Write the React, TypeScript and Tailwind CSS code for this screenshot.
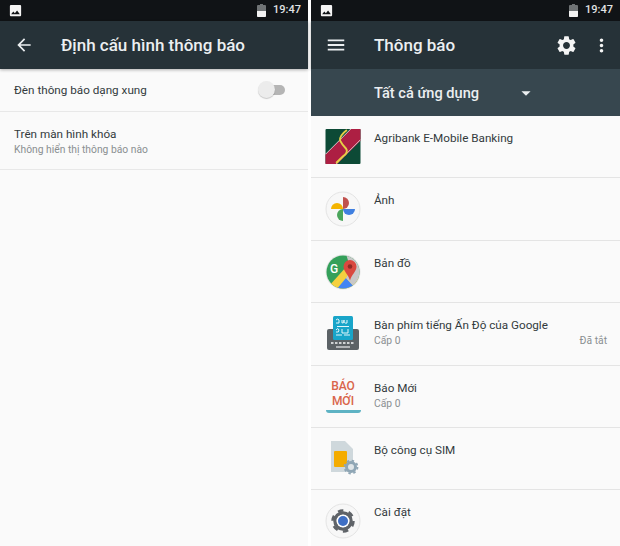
import React from 'react';
import { MdArrowBack, MdMenu, MdSettings, MdMoreVert, MdArrowDropDown, MdImage } from 'react-icons/md';

const BatteryIcon = () => (
  <svg width="9" height="13" viewBox="0 0 9 13">
    <path d="M3 0 H6 V1 H8 a1 1 0 0 1 1 1 V12 a1 1 0 0 1 -1 1 H1 a1 1 0 0 1 -1 -1 V2 a1 1 0 0 1 1 -1 H3 Z" fill="#6f7375" />
    <path d="M0 7 H9 V12 a1 1 0 0 1 -1 1 H1 a1 1 0 0 1 -1 -1 Z" fill="#f2f2f2" />
  </svg>
);

const StatusBar = () => (
  <div className="flex h-[21px] shrink-0 items-center justify-between bg-[#101316] pl-[8px] pr-[7px]">
    <MdImage className="text-[#f5f5f5]" size={15} />
    <div className="flex items-center gap-[7px]">
      <BatteryIcon />
      <span className="text-[11px] font-medium text-[#e0e3e4]">19:47</span>
    </div>
  </div>
);

const AgribankIcon = () => (
  <svg width="36" height="35" viewBox="0 0 36 36">
    <rect width="36" height="36" rx="1" fill="#0d4a36" />
    <path d="M0 26 L26 0 L36 0 L36 12 L12 36 L0 36 Z" fill="#ad1f43" />
    <path d="M0 26 L26 0" stroke="#f1f1f1" strokeWidth="0.8" />
    <path d="M11 36 L36 11" stroke="#f1f1f1" strokeWidth="0.8" />
    <path d="M22 1 Q14 7 15 12 Q17 16 21 20 Q24 24 18 28 L11 35" stroke="#e6cf45" strokeWidth="2" fill="none" />
  </svg>
);

const PhotosIcon = () => (
  <svg width="36" height="36" viewBox="0 0 36 36">
    <circle cx="18" cy="18" r="17" fill="#f7f7f7" stroke="#e4e4e4" />
    <path d="M18 18 V6 a6 6 0 0 1 0 12 Z" fill="#c0504d" />
    <path d="M18 18 H30 a6 6 0 0 1 -12 0 Z" fill="#3f7fe0" />
    <path d="M18 18 V30 a6 6 0 0 1 0 -12 Z" fill="#4aa55b" />
    <path d="M18 18 H6 a6 6 0 0 1 12 0 Z" fill="#f4b400" />
  </svg>
);

const MapsIcon = () => (
  <svg width="36" height="36" viewBox="0 0 36 36">
    <defs>
      <clipPath id="maps-clip">
        <circle cx="18" cy="18" r="16.5" />
      </clipPath>
    </defs>
    <circle cx="18" cy="18" r="17.5" fill="#e6e6e6" />
    <g clipPath="url(#maps-clip)">
      <rect width="36" height="36" fill="#34a05a" />
      <path d="M4 32 L22 12 L36 26 L36 36 L4 36 Z" fill="#f4d03f" />
      <path d="M11 36 L21 24 L32 36 Z" fill="#4285f4" />
      <path d="M21 0 H36 V36 H32 L21 24 L26 16 Z" fill="#c8c8c8" />
    </g>
    <path d="M25 6 a6.5 6.5 0 0 1 6.5 6.5 c0 5 -5 8 -6.5 14 c-1.5 -6 -6.5 -9 -6.5 -14 A6.5 6.5 0 0 1 25 6 Z" fill="#d9493f" />
    <circle cx="25" cy="12.5" r="2.3" fill="#8e2b25" />
    <text x="5" y="18.5" fontSize="12" fontWeight="500" fontFamily="Roboto, sans-serif" fill="#ffffff">G</text>
  </svg>
);

const KeyboardIcon = () => (
  <svg width="36" height="36" viewBox="0 0 36 36">
    <rect x="2" y="13" width="32" height="21" rx="2" fill="#5c6266" />
    <rect x="8" y="0" width="20" height="24" rx="1.5" fill="#19a5c9" />
    <path d="M11 4 q2 -2 3 0 v3 h-3 M17 4 v3 q2 1 2 -3 q0 4 3 3 v-3 M11 14 q2 -3 3 0 q0 3 -3 2 M17 13 v4 h6 v-4 M11 19 h6 M19 19 h6" stroke="#e3f6fa" strokeWidth="1" fill="none" />
    <path d="M12 10.5 h12" stroke="#e3f6fa" strokeWidth="1" />
    <path d="M6 27 h24" stroke="#cfd2d4" strokeWidth="1.8" strokeDasharray="2.5 1.5" />
    <path d="M11 31 h14" stroke="#cfd2d4" strokeWidth="1.5" />
  </svg>
);

const SimIcon = () => (
  <svg width="36" height="36" viewBox="0 0 36 36">
    <path d="M6 0 H20 L28 8 V31 H6 Z" fill="#cfd8dc" />
    <rect x="9" y="10" width="13" height="16" rx="1" fill="#f4ac00" />
    <circle cx="26" cy="26" r="4.5" fill="#dfe5e8" stroke="#8fa6b5" strokeWidth="3" />
    <circle cx="26" cy="26" r="6.5" fill="none" stroke="#8fa6b5" strokeWidth="1.8" strokeDasharray="2.4 2.7" />
  </svg>
);

const SettingsAppIcon = () => (
  <svg width="36" height="36" viewBox="0 0 36 36">
    <circle cx="18" cy="18" r="17" fill="#f7f7f7" stroke="#e4e4e4" />
    <circle cx="18" cy="18" r="8" fill="none" stroke="#5f6368" strokeWidth="3.5" />
    <circle cx="18" cy="18" r="10.5" fill="none" stroke="#5f6368" strokeWidth="2.5" strokeDasharray="5.5 5.5" />
    <circle cx="18" cy="18" r="6.5" fill="#ffffff" />
    <circle cx="18" cy="18" r="5" fill="#3f6fc4" />
  </svg>
);

const BaoMoiIcon = () => (
  <div className="flex h-[36px] w-[36px] flex-col items-center">
    <span className="text-[12px] leading-[15px] font-medium text-[#d9654a]">BÁO</span>
    <span className="text-[12px] leading-[15px] font-medium text-[#d9654a]">MỚI</span>
    <div className="mt-[1px] h-[3px] w-[35px] rounded-b-full bg-[#5eb3c4]" />
  </div>
);

const apps = [
  { name: 'Agribank E-Mobile Banking', icon: <AgribankIcon /> },
  { name: 'Ảnh', icon: <PhotosIcon /> },
  { name: 'Bản đồ', icon: <MapsIcon /> },
  { name: 'Bàn phím tiếng Ấn Độ của Google', sub: 'Cấp 0', status: 'Đã tắt', icon: <KeyboardIcon /> },
  { name: 'Báo Mới', sub: 'Cấp 0', icon: <BaoMoiIcon /> },
  { name: 'Bộ công cụ SIM', icon: <SimIcon /> },
  { name: 'Cài đặt', icon: <SettingsAppIcon /> },
];

export default function App() {
  return (
    <div className="flex h-[546px] w-[620px] overflow-hidden bg-white font-['Roboto',sans-serif]">
      {/* left phone */}
      <div className="flex w-[308px] shrink-0 flex-col bg-[#fafafa]">
        <StatusBar />
        <div className="flex h-[48px] shrink-0 items-center bg-[#263238] shadow-[0_1px_3px_rgba(0,0,0,0.3)]">
          <MdArrowBack className="ml-[14px] text-[#eceff1]" size={20} />
          <span className="mt-[1px] ml-[27px] text-[17px] font-medium text-[#eceff1]">Định cấu hình thông báo</span>
        </div>
        <div className="flex h-[43px] shrink-0 items-center justify-between border-b border-[#e8e8e8] pl-[14px] pr-[23px]">
          <span className="mt-[1px] text-[11.7px] text-[#333a3d]">Đèn thông báo dạng xung</span>
          <div className="relative h-[10px] w-[24px] rounded-full bg-[#b5b5b5]">
            <div className="absolute -top-[4px] -left-[3px] h-[17px] w-[17px] rounded-full bg-[#ececec] shadow-[0_1px_1px_rgba(0,0,0,0.2)]" />
          </div>
        </div>
        <div className="flex h-[58px] shrink-0 flex-col justify-center border-b border-[#e8e8e8] pl-[14px]">
          <span className="text-[11.7px] leading-[17px] text-[#333a3d]">Trên màn hình khóa</span>
          <span className="text-[10.3px] leading-[13px] text-[#8a8f91]">Không hiển thị thông báo nào</span>
        </div>
      </div>
      {/* right phone */}
      <div className="ml-[3px] flex min-w-0 flex-1 flex-col bg-[#fafafa]">
        <StatusBar />
        <div className="flex h-[48px] shrink-0 items-center bg-[#263238] shadow-[0_1px_2px_rgba(0,0,0,0.3)]">
          <MdMenu className="ml-[14px] text-[#eceff1]" size={22} />
          <span className="mt-[1px] ml-[27px] flex-1 text-[17px] font-medium text-[#eceff1]">Thông báo</span>
          <MdSettings className="mr-[2px] text-[#f5f5f5]" size={23} />
          <MdMoreVert className="mr-[8px] ml-[11px] text-[#f5f5f5]" size={21} />
        </div>
        <div className="flex h-[47px] shrink-0 items-center bg-[#37474f] pl-[63px]">
          <span className="mt-[2px] w-[141px] text-[14.6px] font-medium text-[#eceff1]">Tất cả ứng dụng</span>
          <MdArrowDropDown className="text-[#eceff1]" size={22} />
        </div>
        {apps.map((app) => (
          <div key={app.name} className="flex h-[62.4px] shrink-0 border-b border-[#e4e4e4] pl-[14px] pr-[13px] pt-[13px]">
            <div className="w-[49px] shrink-0">{app.icon}</div>
            <div className="min-w-0 flex-1 pt-[1px]">
              <div className="text-[11.7px] leading-[17px] text-[#333a3d]">{app.name}</div>
              {app.sub && (
                <div className="flex justify-between text-[10.3px] leading-[13px] text-[#8a8f91]">
                  <span>{app.sub}</span>
                  <span>{app.status}</span>
                </div>
              )}
            </div>
          </div>
        ))}
      </div>
    </div>
  );
}
